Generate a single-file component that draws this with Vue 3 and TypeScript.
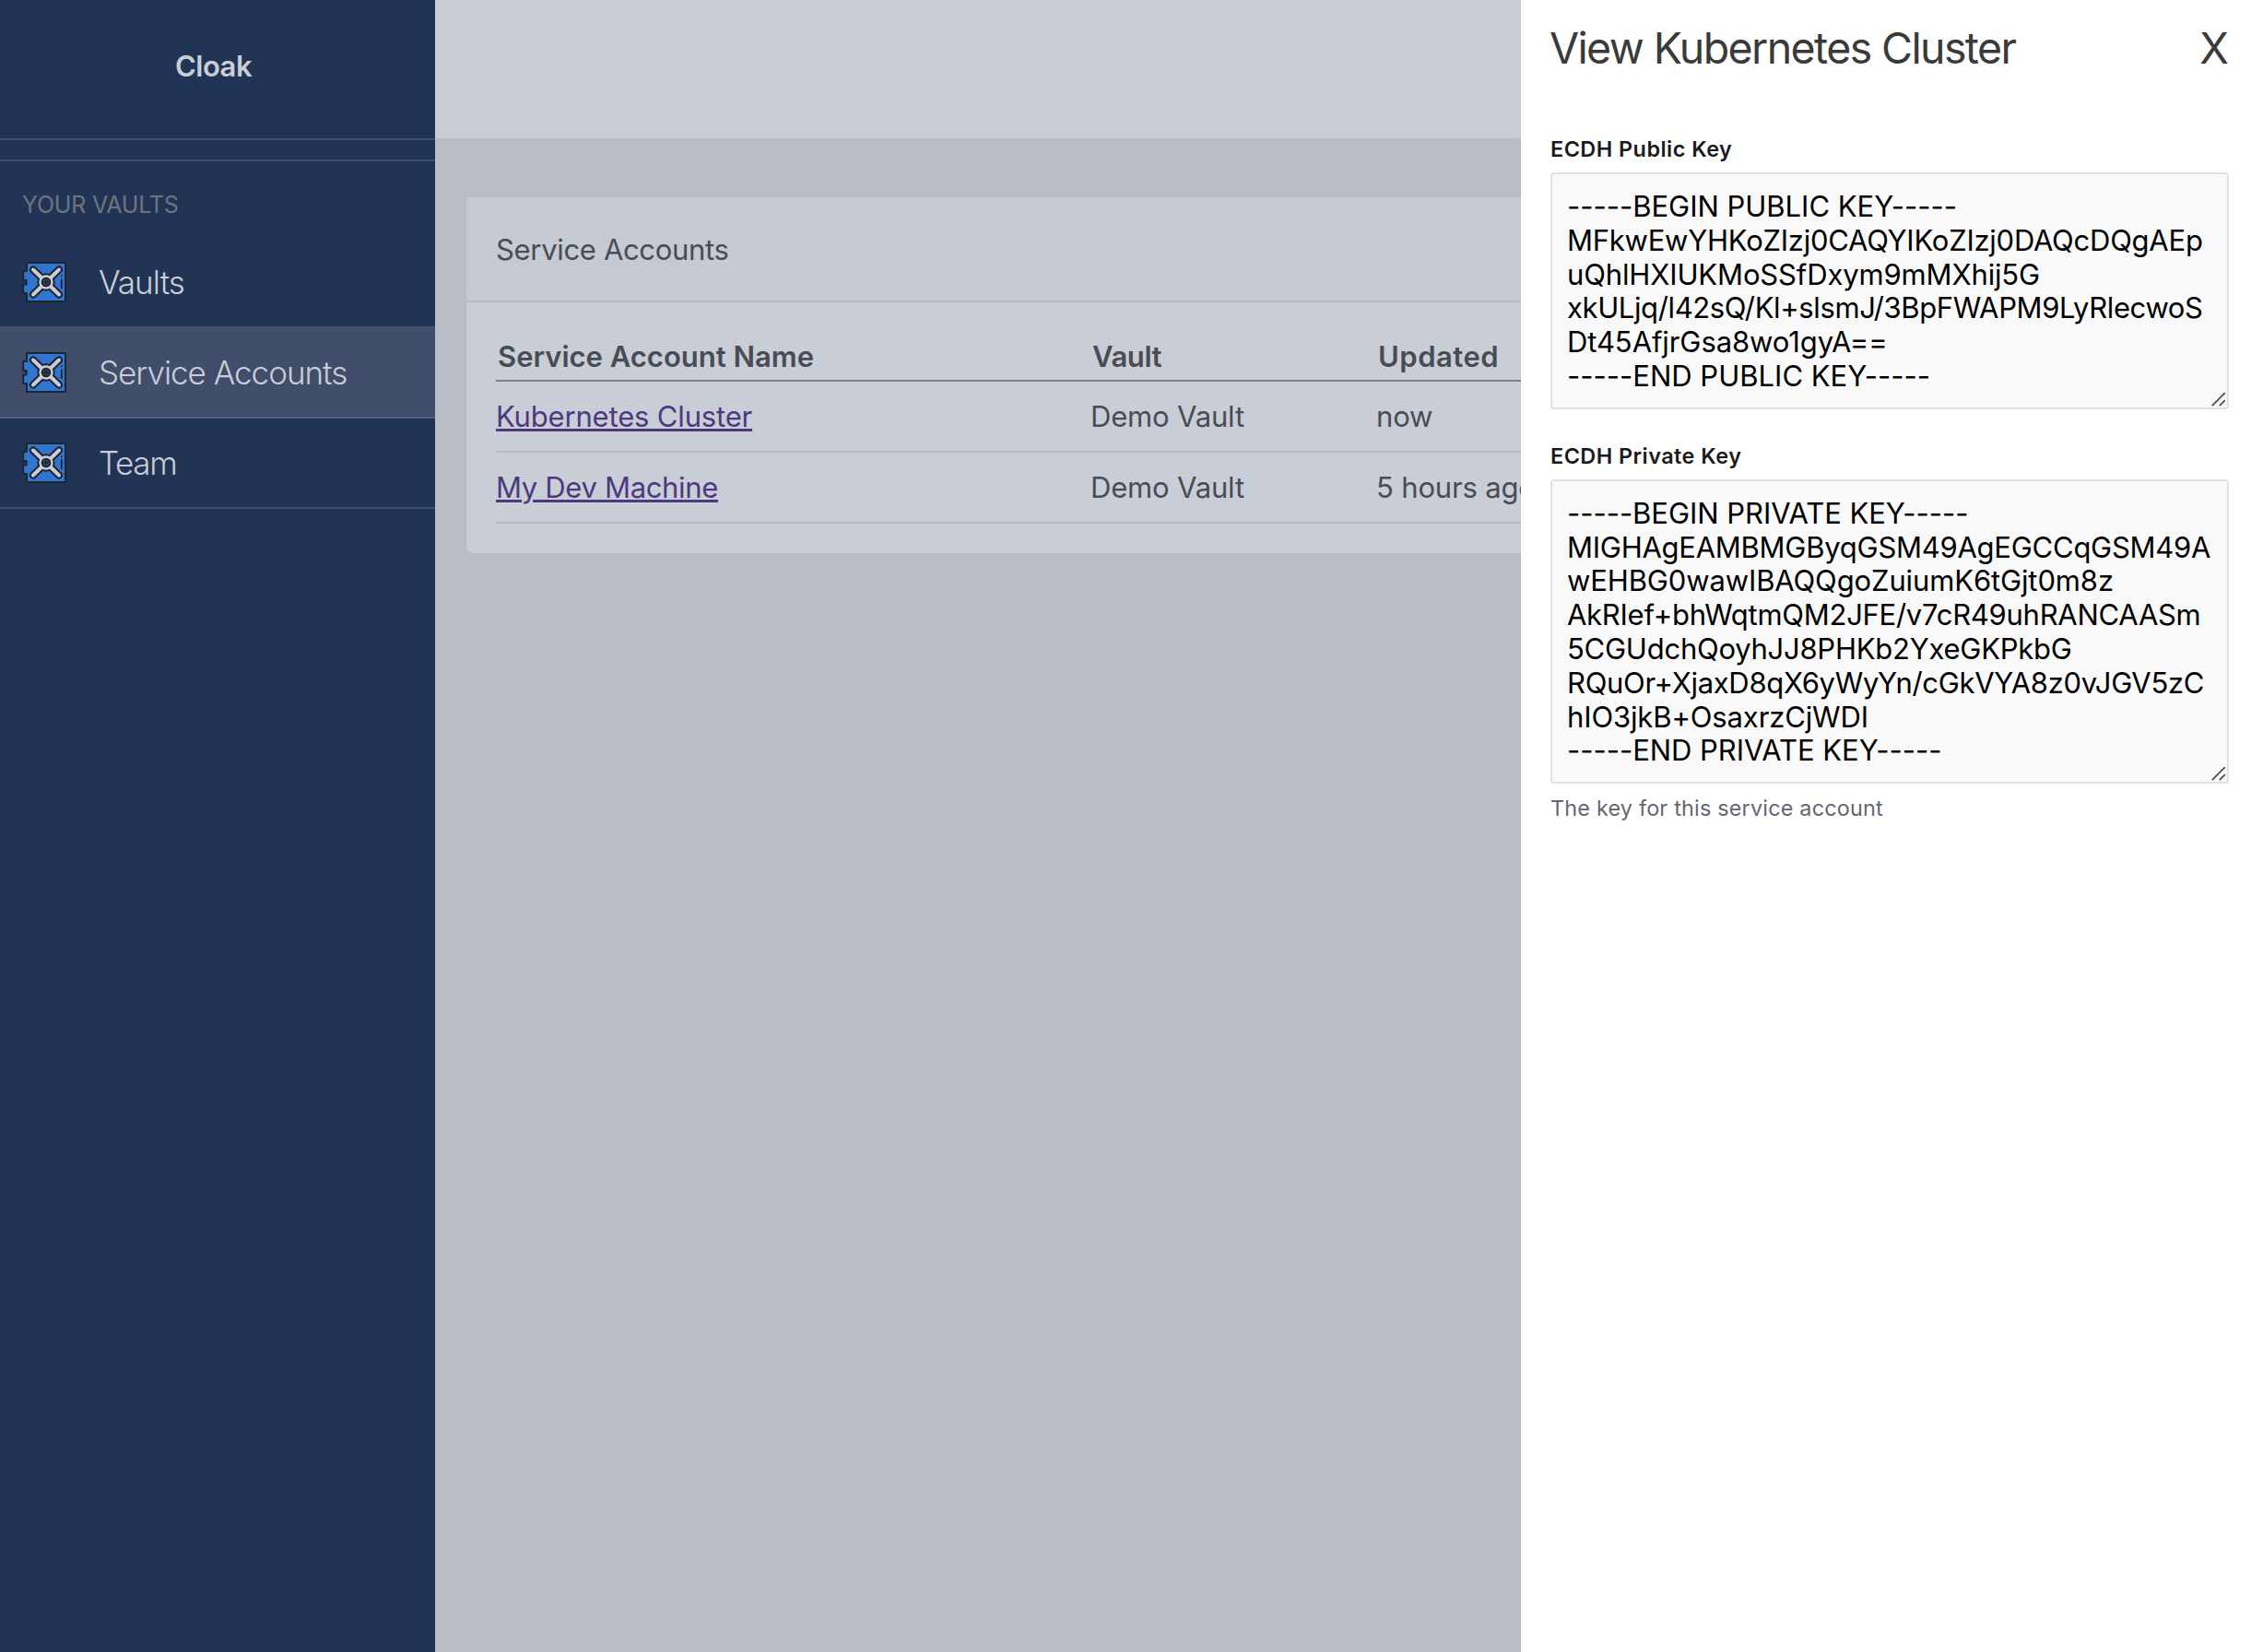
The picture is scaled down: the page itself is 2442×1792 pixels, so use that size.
<script setup lang="ts">
interface NavItem {
  label: string
  active: boolean
  tracking: number
}

interface Account {
  name: string
  vault: string
  updated: string
}

interface KeyLine {
  text: string
  tracking: number
}

interface KeyField {
  label: string
  lines: KeyLine[]
  help?: string
}

const navItems: NavItem[] = [
  { label: 'Vaults', active: false, tracking: -0.95 },
  { label: 'Service Accounts', active: true, tracking: -1.02 },
  { label: 'Team', active: false, tracking: -1.4 },
]

const accounts: Account[] = [
  { name: 'Kubernetes Cluster', vault: 'Demo Vault', updated: 'now' },
  { name: 'My Dev Machine', vault: 'Demo Vault', updated: '5 hours ago' },
]

const fields: KeyField[] = [
  {
    label: 'ECDH Public Key',
    lines: [
      { text: '-----BEGIN PUBLIC KEY-----', tracking: -0.02 },
      { text: 'MFkwEwYHKoZIzj0CAQYIKoZIzj0DAQcDQgAEp', tracking: -0.245 },
      { text: 'uQhlHXIUKMoSSfDxym9mMXhij5G', tracking: -0.14 },
      { text: 'xkULjq/l42sQ/Kl+slsmJ/3BpFWAPM9LyRlecwoS', tracking: -0.384 },
      { text: 'Dt45AfjrGsa8wo1gyA==', tracking: -0.08 },
      { text: '-----END PUBLIC KEY-----', tracking: 0 },
    ],
  },
  {
    label: 'ECDH Private Key',
    lines: [
      { text: '-----BEGIN PRIVATE KEY-----', tracking: -0.04 },
      { text: 'MIGHAgEAMBMGByqGSM49AgEGCCqGSM49A', tracking: -0.26 },
      { text: 'wEHBG0wawIBAQQgoZuiumK6tGjt0m8z', tracking: -0.13 },
      { text: 'AkRIef+bhWqtmQM2JFE/v7cR49uhRANCAASm', tracking: -0.27 },
      { text: '5CGUdchQoyhJJ8PHKb2YxeGKPkbG', tracking: -0.25 },
      { text: 'RQuOr+XjaxD8qX6yWyYn/cGkVYA8z0vJGV5zC', tracking: -0.32 },
      { text: 'hIO3jkB+OsaxrzCjWDI', tracking: -0.13 },
      { text: '-----END PRIVATE KEY-----', tracking: -0.03 },
    ],
    help: 'The key for this service account',
  },
]
</script>

<template>
  <div class="app">
    <aside class="sidebar">
      <div class="brand"><span>Cloak</span></div>
      <div class="spacer"></div>
      <div class="section">YOUR VAULTS</div>
      <nav>
        <a v-for="item in navItems" :key="item.label" class="nav-item" :class="{ active: item.active }">
          <svg class="vault" width="50" height="46" viewBox="-1 -1 50 46" fill="none" stroke-linecap="round" stroke-linejoin="round">
            <path
              d="M6 1H46Q47 1 47 2V42Q47 43 46 43H6Q5 43 5 42V34H1.2V24.5H4.6V20H1.2V10H5V2Q5 1 6 1Z"
              fill="#3175ce" stroke="#1d2530" stroke-width="2"
            />
            <path d="M12 8.5L40 35.5M40 8.5L12 35.5" stroke="#1d2530" stroke-width="8" />
            <circle cx="26" cy="22" r="9.7" fill="#1d2530" />
            <path d="M12 8.5L40 35.5M40 8.5L12 35.5" stroke="#cacdd6" stroke-width="4" />
            <circle cx="26" cy="22" r="7.7" fill="#cacdd6" />
            <circle cx="26" cy="22" r="5.3" fill="#1d2530" />
            <circle cx="26" cy="22" r="3.4" fill="#2d4352" />
            <circle cx="26" cy="22" r="1.7" fill="#1d2530" />
            <path d="M42.8 15.2V15.3M42.8 19.2V28.3" stroke="#1d2530" stroke-width="1.9" />
          </svg>
          <span class="nav-label" :style="{ letterSpacing: item.tracking + 'px' }">{{ item.label }}</span>
        </a>
      </nav>
    </aside>

    <main class="main">
      <header class="topbar"></header>
      <section class="card">
        <div class="card-head">Service Accounts</div>
        <div class="table">
          <div class="row head">
            <span class="th-name">Service Account Name</span>
            <span class="th-vault">Vault</span>
            <span class="th-updated">Updated</span>
          </div>
          <div v-for="account in accounts" :key="account.name" class="row">
            <span><a class="link">{{ account.name }}</a></span>
            <span>{{ account.vault }}</span>
            <span>{{ account.updated }}</span>
          </div>
        </div>
      </section>
    </main>

    <section class="drawer">
      <div class="drawer-head">
        <h1>View Kubernetes Cluster</h1>
        <span class="close">X</span>
      </div>
      <div v-for="field in fields" :key="field.label" class="field">
        <div class="label">{{ field.label }}</div>
        <div class="box">
          <div
            v-for="line in field.lines"
            :key="line.text"
            class="line"
            :style="{ letterSpacing: line.tracking + 'px' }"
          >{{ line.text }}</div>
          <svg class="grip" width="16" height="16" viewBox="0 0 16 16" fill="none" stroke="#4c4c4c" stroke-width="1.7">
            <path d="M0.8 15.2L14.8 1.2M8.8 15.2L14.8 9.2" />
          </svg>
        </div>
        <div v-if="field.help" class="help">{{ field.help }}</div>
      </div>
    </section>
  </div>
</template>

<style>
body {
  margin: 0;
  overflow: hidden;
}
</style>

<style scoped>
.app {
  position: relative;
  display: flex;
  width: 2442px;
  height: 1792px;
  overflow: hidden;
  background: #b8bcc5;
  color: #484c55;
  font-family: Inter, 'Liberation Sans', sans-serif;
  font-size: 31px;
  line-height: 36px;
  font-variant-ligatures: none;
  font-feature-settings: 'calt' 0;
  white-space: nowrap;
}

.sidebar {
  flex: none;
  width: 472px;
  background: #223455;
  color: #c9cdd6;
}

.brand {
  box-sizing: border-box;
  display: flex;
  align-items: center;
  justify-content: center;
  height: 152px;
  padding: 0 9px 7px 0;
  border-bottom: 2px solid #424f6e;
  font-weight: 600;
  letter-spacing: -0.48px;
}

.spacer {
  height: 21px;
  border-bottom: 2px solid #424f6e;
}

.section {
  box-sizing: border-box;
  height: 83px;
  padding: 27px 0 0 24px;
  color: #6f747d;
  font-size: 25px;
  font-weight: 400;
  line-height: 40px;
  letter-spacing: -0.2px;
}

.nav-item {
  display: flex;
  align-items: center;
  height: 96px;
  padding-left: 23px;
  border-bottom: 2px solid #424f6e;
}

.nav-item.active {
  background: #404d6b;
  border-bottom-color: #536080;
}

.vault {
  flex: none;
}

.nav-label {
  margin-left: 34px;
  font-size: 35px;
  font-weight: 350;
}

.main {
  flex: 1;
  min-width: 0;
}

.topbar {
  height: 150px;
  background: #c9cdd6;
}

.card {
  height: 386px;
  margin: 64px 34px 0;
  background: #c9cdd6;
  border-radius: 0 0 8px 8px;
}

.card-head {
  height: 112px;
  padding-left: 32px;
  background: #c5c9d2;
  border-bottom: 2px solid #b7bbc5;
  line-height: 113px;
  letter-spacing: -0.33px;
}

.table {
  padding: 0 32px;
}

.row {
  display: grid;
  grid-template-columns: 645px 310px 1fr;
  align-items: center;
  height: 75px;
  border-bottom: 2px solid #b7bbc5;
  letter-spacing: -0.17px;
}

.row:last-child .link {
  letter-spacing: -0.33px;
}

.row.head {
  align-items: end;
  box-sizing: border-box;
  height: 86px;
  padding-bottom: 7px;
  border-bottom-color: #7b808b;
  font-weight: 600;
}

.th-name {
  padding-left: 2px;
  letter-spacing: -0.01px;
}

.th-vault {
  padding-left: 2px;
  letter-spacing: -0.4px;
}

.th-updated {
  padding-left: 2px;
  letter-spacing: 0.5px;
}

.link {
  color: #4e397f;
  text-decoration: underline;
  text-decoration-thickness: 3px;
  text-underline-offset: 2px;
}

.drawer {
  position: absolute;
  top: 0;
  right: 0;
  bottom: 0;
  box-sizing: border-box;
  width: 792px;
  padding: 24px 24px 0 31px;
  background: #fff;
}

.drawer-head {
  display: flex;
  justify-content: space-between;
  height: 56px;
  margin-bottom: 67.5px;
  color: #3a3a3a;
  font-size: 46.5px;
  font-weight: 430;
  line-height: 56px;
}

h1 {
  margin: 0;
  font-size: inherit;
  font-weight: inherit;
  letter-spacing: -1.61px;
}

.field {
  margin: 0 0 37px 1px;
}

.label {
  margin-bottom: 11.5px;
  color: #1a1b20;
  font-size: 23.4px;
  font-weight: 600;
  line-height: 28px;
  letter-spacing: 0.48px;
}

.field + .field .label {
  margin-bottom: 11px;
}

.box {
  position: relative;
  padding: 17px 15px 15px 16px;
  border: 2px solid #e1e1e1;
  border-radius: 4px;
  background: #f9f9f9;
  color: #000;
}

.field + .field .box {
  padding-bottom: 14.6px;
}

.line {
  height: 36.8px;
  line-height: 36.8px;
}

.grip {
  position: absolute;
  right: 1px;
  bottom: 1px;
}

.help {
  margin-top: 13px;
  color: #626774;
  font-size: 23.4px;
  line-height: 28px;
  letter-spacing: 0.2px;
}
</style>
